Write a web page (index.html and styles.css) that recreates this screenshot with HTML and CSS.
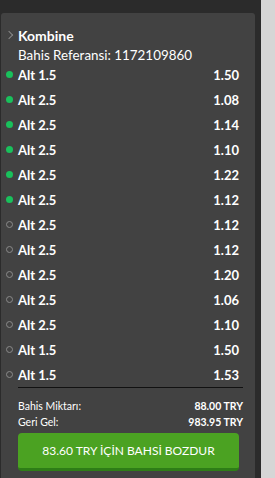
FILE: index.html
```html
<!DOCTYPE html>
<html>
<head>
<meta charset="utf-8">
<link rel="stylesheet" href="styles.css">
</head>
<body>
<div class="page">
  <div class="main">
    <div class="panel">
      <div class="title"><span class="chev"></span><span>Kombine</span></div>
      <div class="ref">Bahis Referansi: 1172109860</div>
      <ul class="legs">
        <li class="leg won"><span class="dot"></span><span class="name">Alt 1.5</span><span class="odd">1.50</span></li>
        <li class="leg won"><span class="dot"></span><span class="name">Alt 2.5</span><span class="odd">1.08</span></li>
        <li class="leg won"><span class="dot"></span><span class="name">Alt 2.5</span><span class="odd">1.14</span></li>
        <li class="leg won"><span class="dot"></span><span class="name">Alt 2.5</span><span class="odd">1.10</span></li>
        <li class="leg won"><span class="dot"></span><span class="name">Alt 2.5</span><span class="odd">1.22</span></li>
        <li class="leg won"><span class="dot"></span><span class="name">Alt 2.5</span><span class="odd">1.12</span></li>
        <li class="leg"><span class="dot"></span><span class="name">Alt 2.5</span><span class="odd">1.12</span></li>
        <li class="leg"><span class="dot"></span><span class="name">Alt 2.5</span><span class="odd">1.12</span></li>
        <li class="leg"><span class="dot"></span><span class="name">Alt 2.5</span><span class="odd">1.20</span></li>
        <li class="leg"><span class="dot"></span><span class="name">Alt 2.5</span><span class="odd">1.06</span></li>
        <li class="leg"><span class="dot"></span><span class="name">Alt 2.5</span><span class="odd">1.10</span></li>
        <li class="leg"><span class="dot"></span><span class="name">Alt 1.5</span><span class="odd">1.50</span></li>
        <li class="leg"><span class="dot"></span><span class="name">Alt 1.5</span><span class="odd">1.53</span></li>
      </ul>
      <div class="summary">
        <div class="sumrow"><span>Bahis Miktarı:</span><span class="val">88.00 TRY</span></div>
        <div class="sumrow"><span>Geri Gel:</span><span class="val">983.95 TRY</span></div>
      </div>
      <button class="cashout">83.60 TRY İÇİN BAHSİ BOZDUR</button>
    </div>
  </div>
  <div class="side"></div>
</div>
</body>
</html>
```
FILE: styles.css
```css
html, body {
  margin: 0;
  padding: 0;
  height: 100%;
}
body {
  font-family: Lato, "Liberation Sans", sans-serif;
  color: #fff;
  background: #d6d6d6;
}
.page {
  display: flex;
  height: 478px;
  overflow: hidden;
}
.main {
  width: 261px;
  background: #2b2b2b;
  padding: 13px 6px 0 1px;
  box-sizing: border-box;
  display: flex;
}
.side {
  flex: 1;
  background: #d6d6d6;
}
.panel {
  flex: 1;
  background: #424242;
  border-radius: 3px 3px 0 0;
  padding: 14px 16px 0 4px;
  display: flex;
  flex-direction: column;
}
.title {
  display: flex;
  align-items: center;
  height: 16px;
  font-weight: 700;
  font-size: 14px;
}
.chev {
  width: 5px;
  height: 5px;
  border-right: 1px solid #888;
  border-top: 1px solid #888;
  transform: rotate(45deg);
  margin: 0 6px 0 1px;
}
.ref {
  padding-left: 13px;
  font-size: 13.4px;
  height: 20px;
  line-height: 20px;
  margin-top: 2px;
}
.legs {
  list-style: none;
  margin: -3px 0 0 0;
  padding: 0;
}
.leg {
  display: flex;
  align-items: center;
  height: 25px;
  font-weight: 700;
  font-size: 13px;
}
.dot {
  width: 5px;
  height: 5px;
  border-radius: 50%;
  border: 1px solid #8a8a8a;
  margin: 0 5px 0 1px;
}
.leg.won .dot {
  width: 7px;
  height: 7px;
  border: 0;
  background: #19c15c;
}
.name { flex: 1; }
.odd { text-align: right; }
.summary {
  margin: 0 -4px 0 13px;
  border-top: 1px solid #111;
  padding-top: 10px;
  font-size: 10.5px;
}
.sumrow {
  display: flex;
  justify-content: space-between;
  height: 16px;
  line-height: 16px;
}
.val { font-weight: 700; }
.cashout {
  margin: 3px 0 0 13px;
  height: 38px;
  border: 0;
  border-bottom: 3px solid #2e7d17;
  border-radius: 4px;
  background: #4ba222;
  color: #fff;
  font-family: inherit;
  font-weight: 400;
  font-size: 12px;
}
```
